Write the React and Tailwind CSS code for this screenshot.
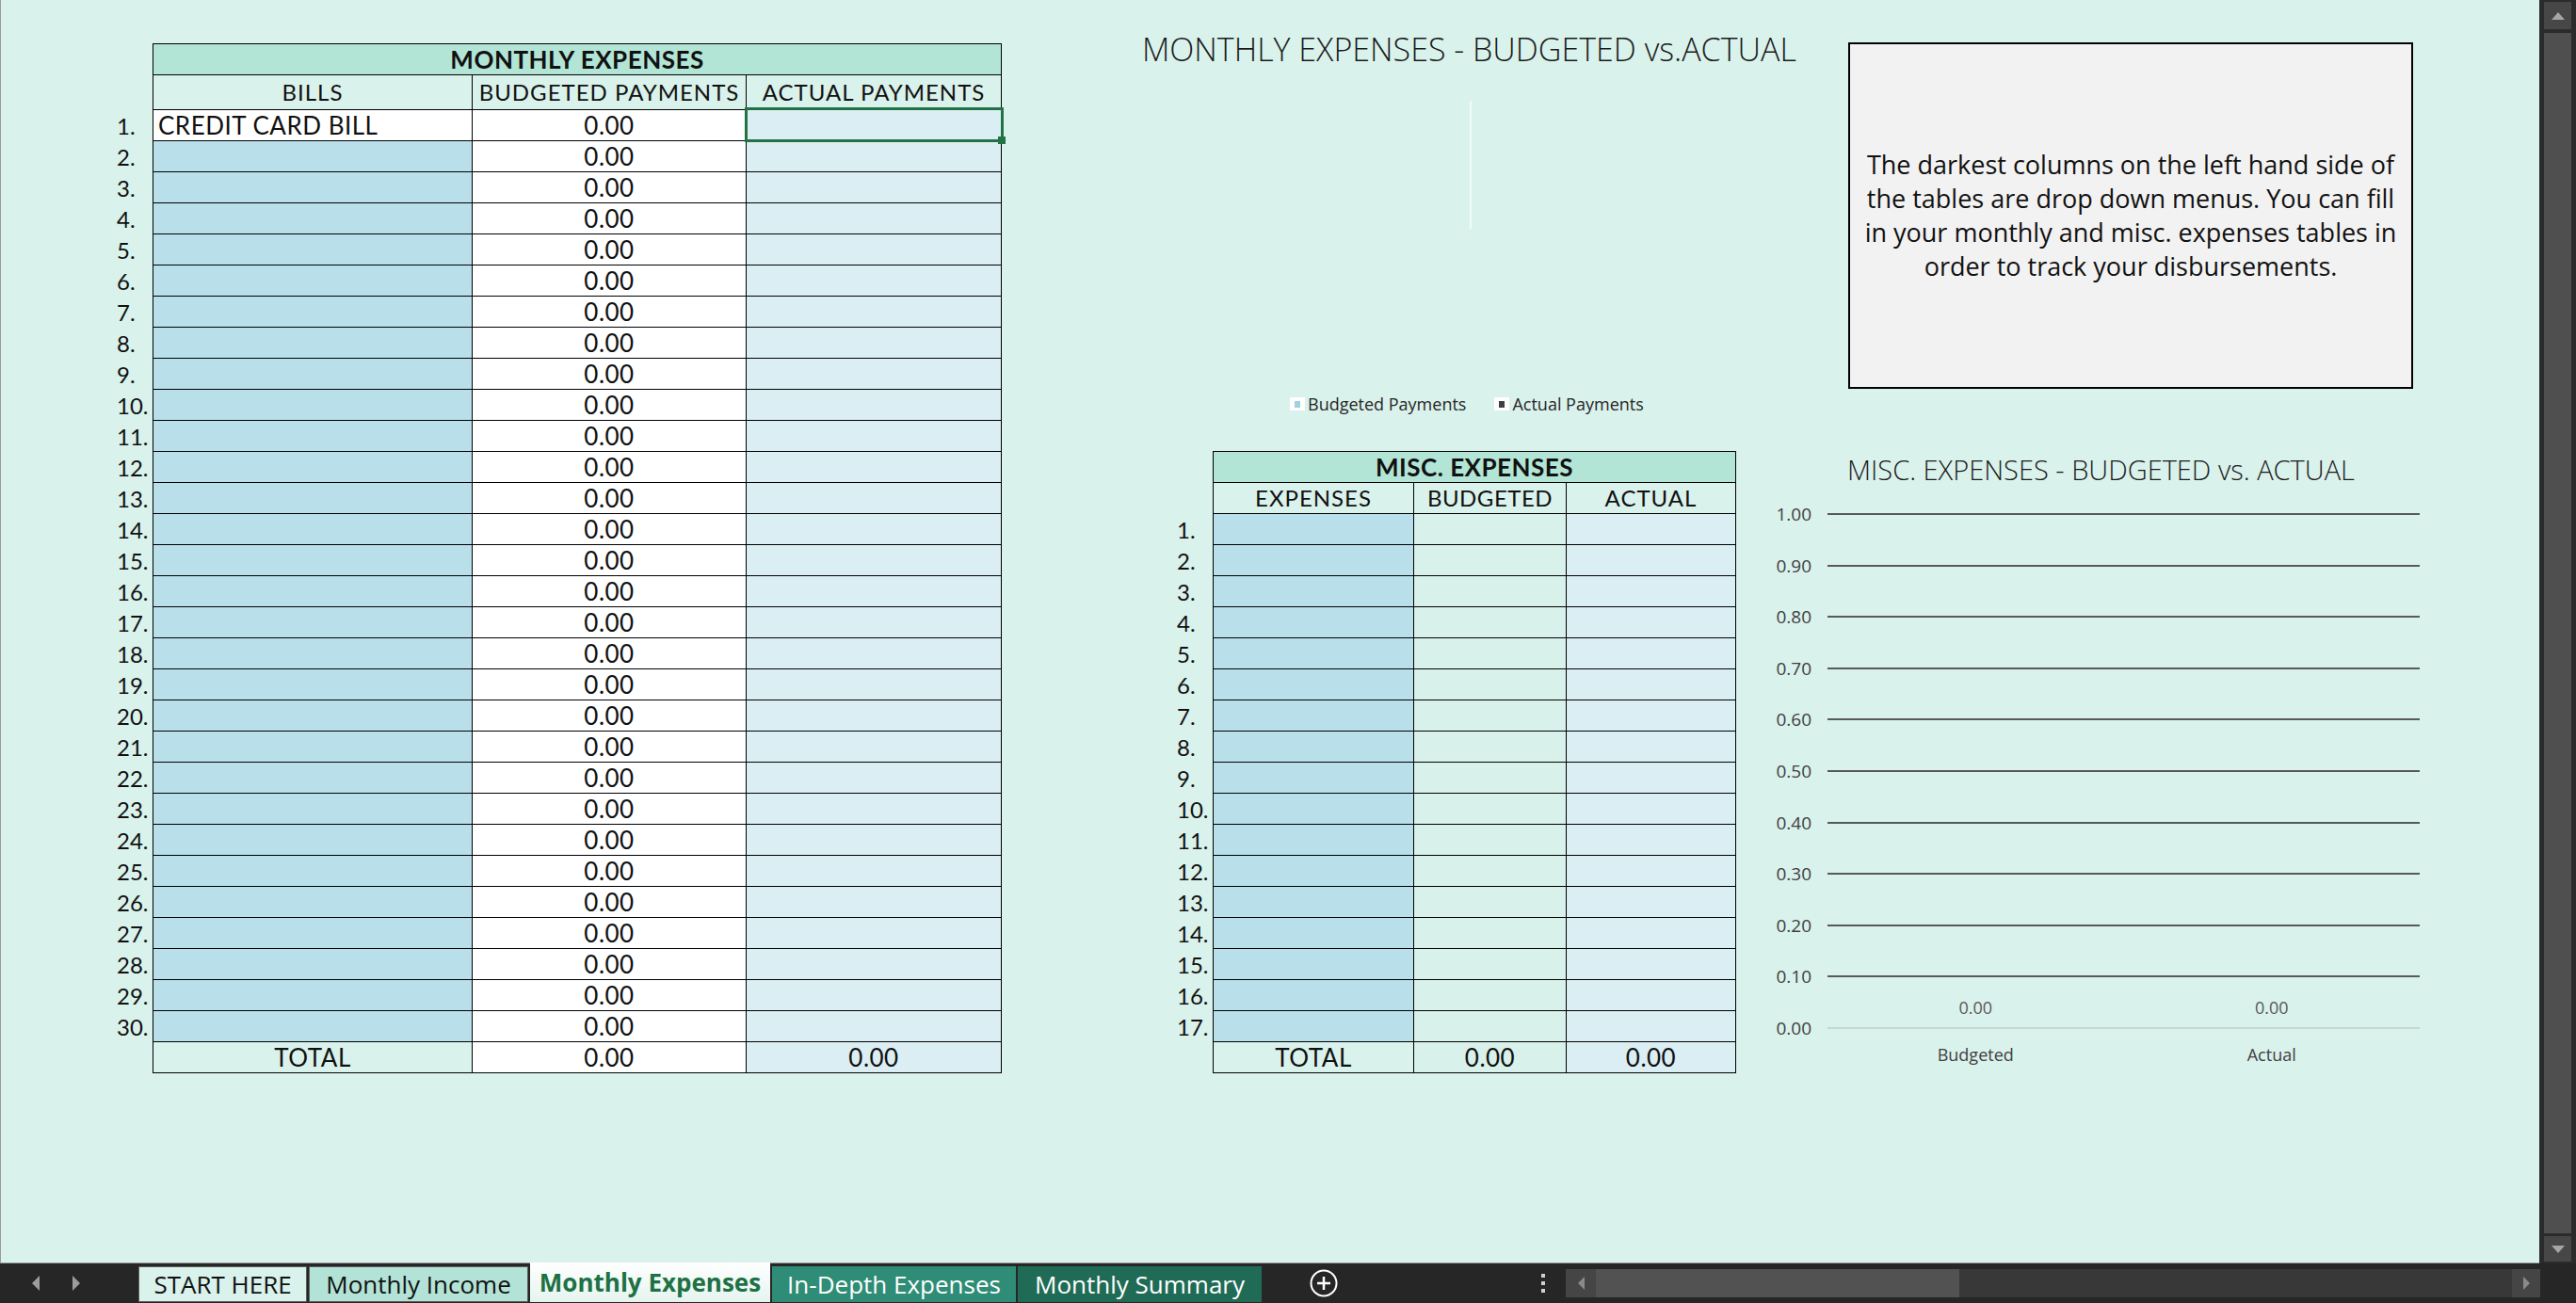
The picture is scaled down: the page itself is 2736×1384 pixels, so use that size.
import React from 'react';

const ROWS = Array.from({ length: 30 }, (_, i) => i + 1);
const MISC_ROWS = Array.from({ length: 17 }, (_, i) => i + 1);
const TICKS = ['1.00', '0.90', '0.80', '0.70', '0.60', '0.50', '0.40', '0.30', '0.20', '0.10', '0.00'];

const cell = 'flex items-center justify-center text-[26px] tracking-[0.5px] text-[#111] leading-none';
const head = 'flex items-center justify-center text-[24px] tracking-[1px] text-[#111] leading-none';

function RowNumbers({ rows, pad }) {
  return (
    <div className={`w-[38px] ${pad} font-['Lato',sans-serif] text-[24px] text-[#111]`}>
      {rows.map((n) => (
        <div key={n} className="h-[33px] flex items-center leading-none">
          {n}.
        </div>
      ))}
    </div>
  );
}

function MonthlyTable() {
  return (
    <div className="w-[902px] grid grid-cols-[338px_290px_270px] gap-[1px] p-[1px] bg-black font-['Lato',sans-serif]">
      <div className={`col-span-3 h-[32px] bg-[#b3e5d7] ${cell} font-bold`}>MONTHLY EXPENSES</div>
      <div className={`h-[36px] bg-[#daf2ec] ${head}`}>BILLS</div>
      <div className={`h-[36px] bg-[#daf2ec] ${head}`}>BUDGETED PAYMENTS</div>
      <div className={`h-[36px] bg-[#daf2ec] ${head}`}>ACTUAL PAYMENTS</div>
      {ROWS.map((n) => (
        <React.Fragment key={n}>
          {n === 1 ? (
            <div className={`h-[32px] bg-white ${cell} justify-start! pl-[5px]`}>CREDIT CARD BILL</div>
          ) : (
            <div className="h-[32px] bg-[#b8dfea]" />
          )}
          <div className={`h-[32px] bg-white ${cell}`}>0.00</div>
          <div className="relative h-[32px] bg-[#daeef3]">
            {n === 1 && (
              <div className="absolute z-10 -left-[2px] -top-[3px] -right-[3px] -bottom-[2px] border-[3px] border-[#217346]">
                <div className="absolute -right-[5px] -bottom-[5px] w-[8px] h-[8px] bg-[#217346]" />
              </div>
            )}
          </div>
        </React.Fragment>
      ))}
      <div className={`h-[32px] bg-[#daf2ec] ${cell}`}>TOTAL</div>
      <div className={`h-[32px] bg-white ${cell}`}>0.00</div>
      <div className={`h-[32px] bg-[#daeef3] ${cell}`}>0.00</div>
    </div>
  );
}

function MiscTable() {
  return (
    <div className="w-[556px] grid grid-cols-[212px_161px_179px] gap-[1px] p-[1px] bg-black font-['Lato',sans-serif]">
      <div className={`col-span-3 h-[32px] bg-[#b3e5d7] ${cell} font-bold`}>MISC. EXPENSES</div>
      <div className={`h-[32px] bg-[#daf2ec] ${head}`}>EXPENSES</div>
      <div className={`h-[32px] bg-[#daf2ec] ${head} tracking-[0.5px]!`}>BUDGETED</div>
      <div className={`h-[32px] bg-[#daf2ec] ${head}`}>ACTUAL</div>
      {MISC_ROWS.map((n) => (
        <React.Fragment key={n}>
          <div className="h-[32px] bg-[#b8dfea]" />
          <div className="h-[32px] bg-[#d8f1ea]" />
          <div className="h-[32px] bg-[#daeef3]" />
        </React.Fragment>
      ))}
      <div className={`h-[32px] bg-[#daf2ec] ${cell}`}>TOTAL</div>
      <div className={`h-[32px] bg-[#d8f1ea] ${cell}`}>0.00</div>
      <div className={`h-[32px] bg-[#daeef3] ${cell}`}>0.00</div>
    </div>
  );
}

function LegendKey({ color }) {
  return (
    <div className="w-[16px] h-[14px] bg-white flex items-center justify-center">
      <div className={`w-[6px] h-[7px] ${color}`} />
    </div>
  );
}

function MiscChart() {
  return (
    <div className="ml-[27px] font-['Open_Sans',sans-serif]">
      <div className="pl-[91px] mt-[3px] text-[29px] leading-[34px] font-light text-[#1a1a1a] whitespace-nowrap">
        MISC. EXPENSES - BUDGETED vs. ACTUAL
      </div>
      <div className="relative mt-[20px] h-[566px] flex flex-col justify-between">
        {TICKS.map((t, i) => (
          <div key={t} className="h-[20px] flex items-center">
            <div className="w-[53px] text-right text-[19px] leading-[20px] text-[#404040]">{t}</div>
            <div className={`ml-[17px] w-[629px] h-[2px] ${i === TICKS.length - 1 ? 'bg-[#c3d8d2]' : 'bg-[#595959]'}`} />
          </div>
        ))}
        <div className="absolute left-[70px] top-[523px] w-[629px] flex text-[18px] leading-[22px] text-[#595959]">
          <div className="flex-1 text-center">0.00</div>
          <div className="flex-1 text-center">0.00</div>
        </div>
      </div>
      <div className="mt-[7px] ml-[70px] w-[629px] flex text-[18px] leading-[22px] text-[#404040]">
        <div className="flex-1 text-center">Budgeted</div>
        <div className="flex-1 text-center">Actual</div>
      </div>
    </div>
  );
}

function VerticalScrollbar() {
  return (
    <div className="w-[39px] h-full bg-[#2b2b2b] flex flex-col px-[5px] pt-[2px] pb-[2px]">
      <div className="h-[29px] bg-[#474747] flex items-center justify-center">
        <svg width="14" height="8" viewBox="0 0 14 8"><polygon points="7,0 14,8 0,8" fill="#a6a6a6" /></svg>
      </div>
      <div className="mt-[4px] flex-1 bg-[#4f4f4f]" />
      <div className="mt-[3px] h-[27px] bg-[#474747] flex items-center justify-center">
        <svg width="14" height="8" viewBox="0 0 14 8"><polygon points="0,0 14,0 7,8" fill="#a6a6a6" /></svg>
      </div>
    </div>
  );
}

function Tab({ label, w, tone }) {
  const tones = {
    start: 'h-[38px] bg-[#d9f2ec] text-[#111] border border-[#5d5d5d]',
    income: 'h-[38px] bg-[#b3e3d6] text-[#111] border border-[#5d5d5d]',
    active: 'h-[42px] bg-gradient-to-b from-white to-[#e4f4ee] text-[#1e7145] font-bold',
    depth: 'h-[38px] bg-[#2f8c76] text-white',
    summary: 'h-[38px] bg-[#1f6b56] text-white',
  };
  return (
    <div className={`${w} ${tones[tone]} flex items-center justify-center text-[26px] leading-none whitespace-nowrap`}>
      {label}
    </div>
  );
}

function TabBar() {
  return (
    <div className="h-[42px] bg-[#262626] flex font-['Open_Sans',sans-serif]">
      <div className="w-[147px] flex items-center">
        <svg className="ml-[34px]" width="8" height="16" viewBox="0 0 8 16"><polygon points="8,0 8,16 0,8" fill="#9c9c9c" /></svg>
        <svg className="ml-[35px]" width="8" height="16" viewBox="0 0 8 16"><polygon points="0,0 8,8 0,16" fill="#9c9c9c" /></svg>
      </div>
      <div className="flex items-end gap-[2px] pb-[1px]">
        <Tab label="START HERE" w="w-[179px]" tone="start" />
        <Tab label="Monthly Income" w="w-[233px]" tone="income" />
        <Tab label="Monthly Expenses" w="w-[255px]" tone="active" />
        <Tab label="In-Depth Expenses" w="w-[259px]" tone="depth" />
        <Tab label="Monthly Summary" w="w-[259px]" tone="summary" />
      </div>
      <div className="ml-[51px] flex items-center">
        <svg width="30" height="30" viewBox="0 0 30 30">
          <circle cx="15" cy="15" r="13.5" fill="none" stroke="#ffffff" strokeWidth="2" />
          <path d="M15 8v14M8 15h14" stroke="#ffffff" strokeWidth="2.5" />
        </svg>
      </div>
      <div className="ml-[216px] flex flex-col justify-center gap-[4px]">
        <div className="w-[4px] h-[4px] bg-[#d0d0d0]" />
        <div className="w-[4px] h-[4px] bg-[#d0d0d0]" />
        <div className="w-[4px] h-[4px] bg-[#d0d0d0]" />
      </div>
      <div className="ml-[22px] self-center w-[1035px] h-[30px] bg-[#383838] flex">
        <div className="w-[32px] bg-[#454545] flex items-center justify-center">
          <svg width="7" height="14" viewBox="0 0 7 14"><polygon points="7,0 7,14 0,7" fill="#8a8a8a" /></svg>
        </div>
        <div className="w-[386px] bg-[#525252]" />
        <div className="flex-1" />
        <div className="w-[30px] bg-[#454545] flex items-center justify-center">
          <svg width="7" height="14" viewBox="0 0 7 14"><polygon points="0,0 7,7 0,14" fill="#8a8a8a" /></svg>
        </div>
      </div>
    </div>
  );
}

export default function App() {
  return (
    <div className="w-[2736px] h-[1384px] flex flex-col overflow-hidden bg-[#262626]">
      <div className="h-[1342px] flex">
        <div className="w-[2697px] h-full flex items-start bg-[#daf2ec] border-l border-b border-[#9a9a9a]">
          {/* monthly expenses table */}
          <div className="pl-[123px] pt-[46px] flex">
            <RowNumbers rows={ROWS} pad="pt-[71px]" />
            <MonthlyTable />
          </div>

          {/* charts, note and misc table */}
          <div className="ml-[149px] flex flex-col">
            <div className="h-[479px] flex items-start">
              <div className="w-[750px] flex flex-col font-['Open_Sans',sans-serif]">
                <div className="pt-[31px] text-[34px] leading-[42px] font-light text-[#1a1a1a] whitespace-nowrap">
                  MONTHLY EXPENSES - BUDGETED vs.ACTUAL
                </div>
                <div className="ml-[348px] mt-[34px] w-[2px] h-[136px] bg-[#f3fbf8]" />
                <div className="mt-[176px] pl-[157px] flex items-center text-[18px] leading-[20px] text-[#262626]">
                  <LegendKey color="bg-[#9fd2de]" />
                  <span className="ml-[3px]">Budgeted Payments</span>
                  <div className="ml-[30px]">
                    <LegendKey color="bg-[#404040]" />
                  </div>
                  <span className="ml-[3px]">Actual Payments</span>
                </div>
              </div>
              <div className="mt-[45px] w-[600px] h-[368px] bg-[#f2f2f2] border-2 border-black flex items-center justify-center text-center font-['Open_Sans',sans-serif] text-[27px] leading-[36px] text-[#111]">
                <p>
                  The darkest columns on the left hand side of
                  <br />
                  the tables are drop down menus. You can fill
                  <br />
                  in your monthly and misc. expenses tables in
                  <br />
                  order to track your disbursements.
                </p>
              </div>
            </div>
            <div className="flex items-start">
              <div className="ml-[37px]">
                <RowNumbers rows={MISC_ROWS} pad="pt-[67px]" />
              </div>
              <MiscTable />
              <MiscChart />
            </div>
          </div>
        </div>
        <VerticalScrollbar />
      </div>
      <TabBar />
    </div>
  );
}
